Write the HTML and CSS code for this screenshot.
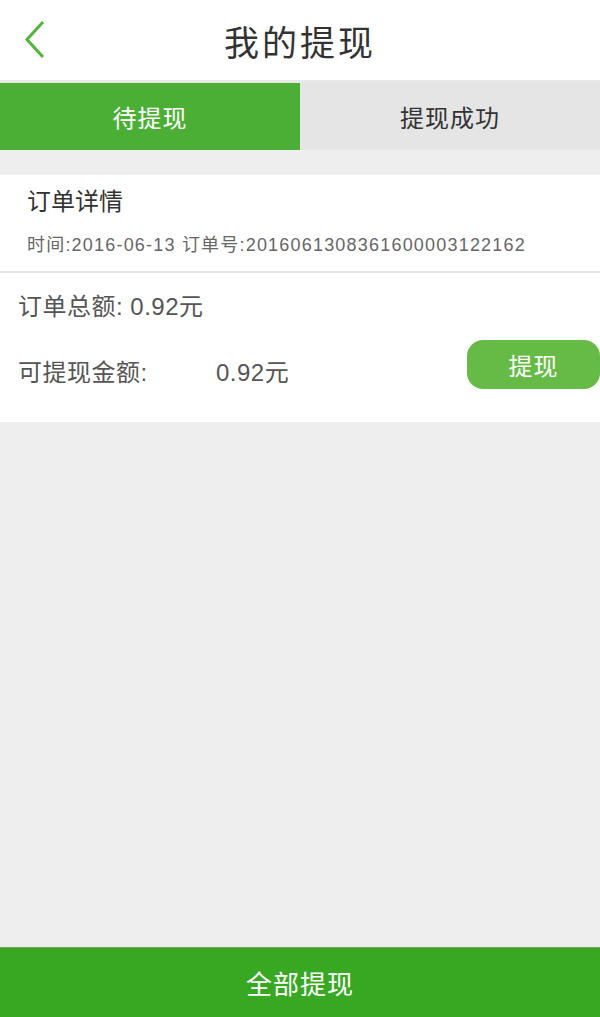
FILE: index.html
```html
<!DOCTYPE html>
<html lang="zh-CN">
<head>
  <meta charset="UTF-8" />
  <meta name="viewport" content="width=device-width, initial-scale=1" />
  <title>我的提现</title>
  <link rel="stylesheet" href="styles.css">
</head>
<body>

  <header class="topbar">
    <a href="#" class="back">
      <svg width="24" height="40" viewBox="0 0 24 40">
        <polyline points="19,3 3,20.5 19,38" fill="none" stroke="#52b43a" stroke-width="3" />
      </svg>
    </a>
    <h1>我的提现</h1>
  </header>

  <nav class="tabs">
    <a href="#" class="tab active">待提现</a>
    <a href="#" class="tab">提现成功</a>
  </nav>

  <div class="order">
    <div class="order-head">
      <h2>订单详情</h2>
      <p class="meta">时间:2016-06-13 订单号:2016061308361600003122162</p>
    </div>
    <div class="order-body">
      <div class="row">订单总额: 0.92元</div>
      <div class="row row-cash">
        <span class="label">可提现金额:</span>
        <span class="amount">0.92元</span>
        <button class="btn-cash">提现</button>
      </div>
    </div>
  </div>

  <div class="spacer"></div>

  <footer class="bottombar">全部提现</footer>

</body>
</html>
```

FILE: styles.css
```css
html, body {
  height: 100%;
}
body {
  margin: 0;
  font-family: "Liberation Sans", "Noto Sans CJK SC", sans-serif;
  background: #eeeeee;
  display: flex;
  flex-direction: column;
}
.topbar {
  height: 80px;
  background: #fff;
  display: flex;
  align-items: center;
  justify-content: center;
  position: relative;
  border-bottom: 3px solid #e8e8e8;
}
.back {
  position: absolute;
  left: 24px;
  top: 19px;
}
.topbar h1 {
  margin: 0;
  font-size: 35px;
  font-weight: normal;
  color: #333;
  letter-spacing: 3px;
  font-family: "Noto Sans CJK SC", sans-serif;
}
.tabs {
  display: flex;
  height: 67px;
}
.tab {
  flex: 1;
  display: flex;
  align-items: center;
  justify-content: center;
  font-size: 24px;
  letter-spacing: 1px;
  color: #333;
  background: #e5e5e5;
  text-decoration: none;
  font-family: "Noto Sans CJK SC", sans-serif;
}
.tab.active {
  background: #4caf35;
  color: #fff;
}
.order {
  margin-top: 25px;
  background: #fff;
}
.order-head {
  padding: 8px 27px 0;
  height: 88px;
  border-bottom: 2px solid #e6e6e6;
}
.order-head h2 {
  margin: 0;
  font-size: 24px;
  font-weight: normal;
  color: #333;
  line-height: 34px;
  font-family: "Noto Sans CJK SC", sans-serif;
}
.meta {
  margin: 16px 0 0;
  font-size: 18px;
  letter-spacing: 1.2px;
  color: #666;
  line-height: 24px;
}
.order-body {
  padding: 18px 0 33px 18px;
}
.row {
  font-size: 24px;
  letter-spacing: 0.5px;
  color: #555;
  line-height: 32px;
}
.row-cash {
  display: flex;
  align-items: center;
  margin-top: 16px;
}
.row-cash .label {
  width: 198px;
  padding-top: 18px;
}
.row-cash .amount {
  flex: 1;
  padding-top: 18px;
}
.btn-cash {
  width: 133px;
  height: 49px;
  border: none;
  border-radius: 16px;
  background: #66bb46;
  color: #fff;
  font-size: 24px;
  letter-spacing: 1px;
  font-family: "Noto Sans CJK SC", sans-serif;
}
.spacer {
  flex: 1;
}
.bottombar {
  height: 69px;
  background: #38a822;
  border-top: 1px solid #6fa65f;
  color: #fff;
  font-size: 26px;
  letter-spacing: 1px;
  display: flex;
  align-items: center;
  justify-content: center;
  font-family: "Noto Sans CJK SC", sans-serif;
}
```
